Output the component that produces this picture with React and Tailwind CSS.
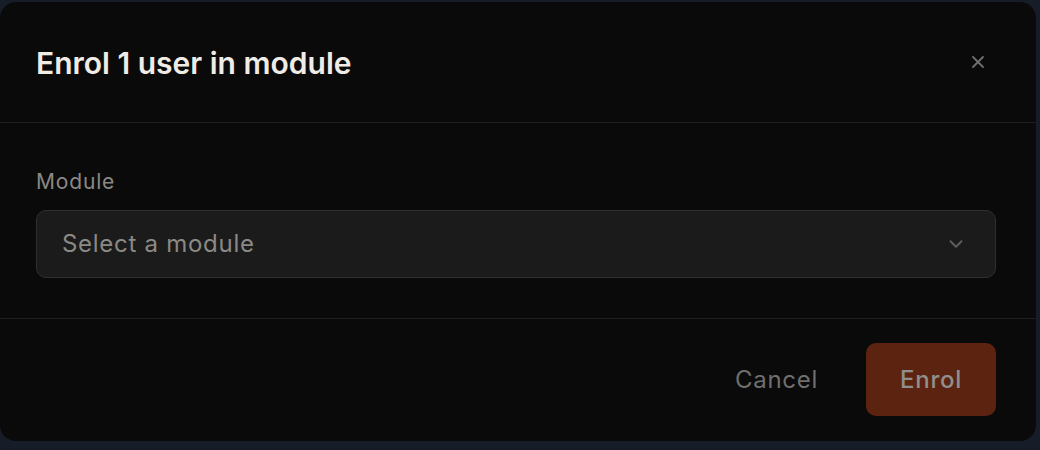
import React from "react";
import { X, ChevronDown } from "lucide-react";

// Enrol dialog, shown over the users table
const EnrolDialog = () => {
  return (
    <div className="w-[1036px] h-[439px] mt-[2px] bg-[#0a0a0a] rounded-[16px] flex flex-col overflow-hidden">
      {/* Header */}
      <div className="h-[121px] flex items-center justify-between pl-[36px] pr-[48px] border-b border-[#1e1e1e] shrink-0">
        <h2 className="text-[30px] font-semibold text-[#efece6] leading-[34px] pt-[2px]">
          Enrol 1 user in module
        </h2>
        <button className="text-[#6f6f6d]">
          <X className="w-[20px] h-[20px]" strokeWidth={2.2} />
        </button>
      </div>

      {/* Body */}
      <div className="pl-[36px] pr-[40px] pt-[47px] pb-[40px] border-b border-[#1e1e1e] shrink-0">
        <label className="block text-[21px] leading-[24px] text-[#8b8985] tracking-[0.04em]">
          Module
        </label>
        <button className="mt-[16px] w-full h-[68px] rounded-[10px] bg-[#1b1b1b] border border-[#2f2f2f] flex items-center justify-between pl-[25px] pr-[28px]">
          <span className="text-[24px] text-[#8b8985] tracking-[0.03em]">Select a module</span>
          <ChevronDown className="w-[22px] h-[22px] text-[#5f5f5f]" strokeWidth={2} />
        </button>
      </div>

      {/* Footer */}
      <div className="flex-1 flex items-center justify-end gap-[16px] pr-[40px] pb-[1px]">
        <button className="h-[73px] px-[32px] text-[24px] text-[#6f6f6d] tracking-[0.03em]">Cancel</button>
        <button className="h-[73px] w-[130px] rounded-[10px] bg-[#5c2410] text-[24px] font-medium text-[#8f8f8d] tracking-[0.03em]">
          Enrol
        </button>
      </div>
    </div>
  );
};

const App = () => {
  return (
    <div
      className="w-[1040px] h-[450px] bg-[#161c28] overflow-hidden"
      style={{ fontFamily: "Inter, 'Noto Sans', sans-serif" }}
    >
      <EnrolDialog />
    </div>
  );
};

export default App;
